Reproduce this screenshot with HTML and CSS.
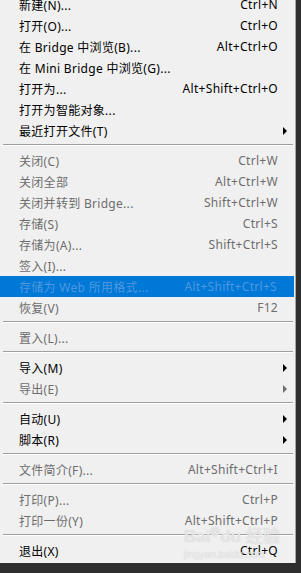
FILE: index.html
```html
<!DOCTYPE html>
<html lang="zh-CN">
<head>
    <meta charset="UTF-8">
    <meta name="viewport" content="width=device-width, initial-scale=1.0">
    <title>文件菜单</title>
    <link rel="stylesheet" href="styles.css">
</head>
<body>
    <div class="menu">
        <div class="item"><span class="label">新建(N)...</span><span class="key">Ctrl+N</span></div>
        <div class="item"><span class="label">打开(O)...</span><span class="key">Ctrl+O</span></div>
        <div class="item"><span class="label">在 Bridge 中浏览(B)...</span><span class="key">Alt+Ctrl+O</span></div>
        <div class="item"><span class="label">在 Mini Bridge 中浏览(G)...</span><span class="key"></span></div>
        <div class="item"><span class="label">打开为...</span><span class="key">Alt+Shift+Ctrl+O</span></div>
        <div class="item"><span class="label">打开为智能对象...</span><span class="key"></span></div>
        <div class="item sub"><span class="label">最近打开文件(T)</span><span class="key"></span></div>
        <div class="sep"></div>
        <div class="item off"><span class="label">关闭(C)</span><span class="key">Ctrl+W</span></div>
        <div class="item off"><span class="label">关闭全部</span><span class="key">Alt+Ctrl+W</span></div>
        <div class="item off"><span class="label">关闭并转到 Bridge...</span><span class="key">Shift+Ctrl+W</span></div>
        <div class="item off"><span class="label">存储(S)</span><span class="key">Ctrl+S</span></div>
        <div class="item off"><span class="label">存储为(A)...</span><span class="key">Shift+Ctrl+S</span></div>
        <div class="item off"><span class="label">签入(I)...</span><span class="key"></span></div>
        <div class="item off hover"><span class="label">存储为 Web 所用格式...</span><span class="key">Alt+Shift+Ctrl+S</span></div>
        <div class="item off"><span class="label">恢复(V)</span><span class="key">F12</span></div>
        <div class="sep"></div>
        <div class="item off"><span class="label">置入(L)...</span><span class="key"></span></div>
        <div class="sep"></div>
        <div class="item sub"><span class="label">导入(M)</span><span class="key"></span></div>
        <div class="item off sub"><span class="label">导出(E)</span><span class="key"></span></div>
        <div class="sep"></div>
        <div class="item sub"><span class="label">自动(U)</span><span class="key"></span></div>
        <div class="item sub"><span class="label">脚本(R)</span><span class="key"></span></div>
        <div class="sep"></div>
        <div class="item off"><span class="label">文件简介(F)...</span><span class="key">Alt+Shift+Ctrl+I</span></div>
        <div class="sep"></div>
        <div class="item off"><span class="label">打印(P)...</span><span class="key">Ctrl+P</span></div>
        <div class="item off"><span class="label">打印一份(Y)</span><span class="key">Alt+Shift+Ctrl+P</span></div>
        <div class="sep"></div>
        <div class="item"><span class="label">退出(X)</span><span class="key">Ctrl+Q</span></div>

        <div class="mark">
            <div class="mark-logo">Bai<span class="paw">&#x2742;</span>du 经验</div>
            <div class="mark-url">jingyan.baidu.com</div>
        </div>
    </div>
</body>
</html>
```

FILE: styles.css
```css
body { margin: 0; background: #2e2e2e; height: 573px; overflow: hidden; font-family: "Noto Sans", "Noto Sans CJK SC", sans-serif; font-size: 12px; }
.menu { position: relative; width: 295px; margin-top: -6px; padding-bottom: 2px; background: #f0f0f0; border-right: 1px solid #a8a8a8; }
.item { display: flex; align-items: center; height: 21px; padding: 0 17px 0 19px; color: #000; white-space: nowrap; letter-spacing: 0.3px; }
.item .label { flex: 1; }
.item .key { text-align: right; }
.item.off { color: #6d6d6d; }
.item.hover { background: #0078d7; color: #4f97de; margin-right: 1px; }
.item.sub { position: relative; }
.item.sub::after { content: ""; position: absolute; right: 8px; top: 7px; border-left: 4px solid #000; border-top: 4px solid transparent; border-bottom: 4px solid transparent; }
.item.off.sub::after { border-left-color: #6d6d6d; }
.sep { height: 9px; padding-top: 3px; box-sizing: border-box; margin: 0 2px 0 3px; }
.sep::before { content: ""; display: block; height: 1px; background: #a0a0a0; border-bottom: 1px solid #fff; }
.mark { position: absolute; left: 184px; top: 529px; color: rgba(255, 255, 255, 0.55); text-shadow: 0 0 1px #c4c4c4; pointer-events: none; }
.mark-logo { font-family: "Liberation Sans", "Noto Sans CJK SC", sans-serif; font-size: 17px; font-weight: bold; line-height: 18px; }
.paw { font-size: 12px; vertical-align: 6px; }
.mark-url { font-family: "Liberation Sans", sans-serif; font-size: 10px; line-height: 11px; margin-top: 3px; }
```
